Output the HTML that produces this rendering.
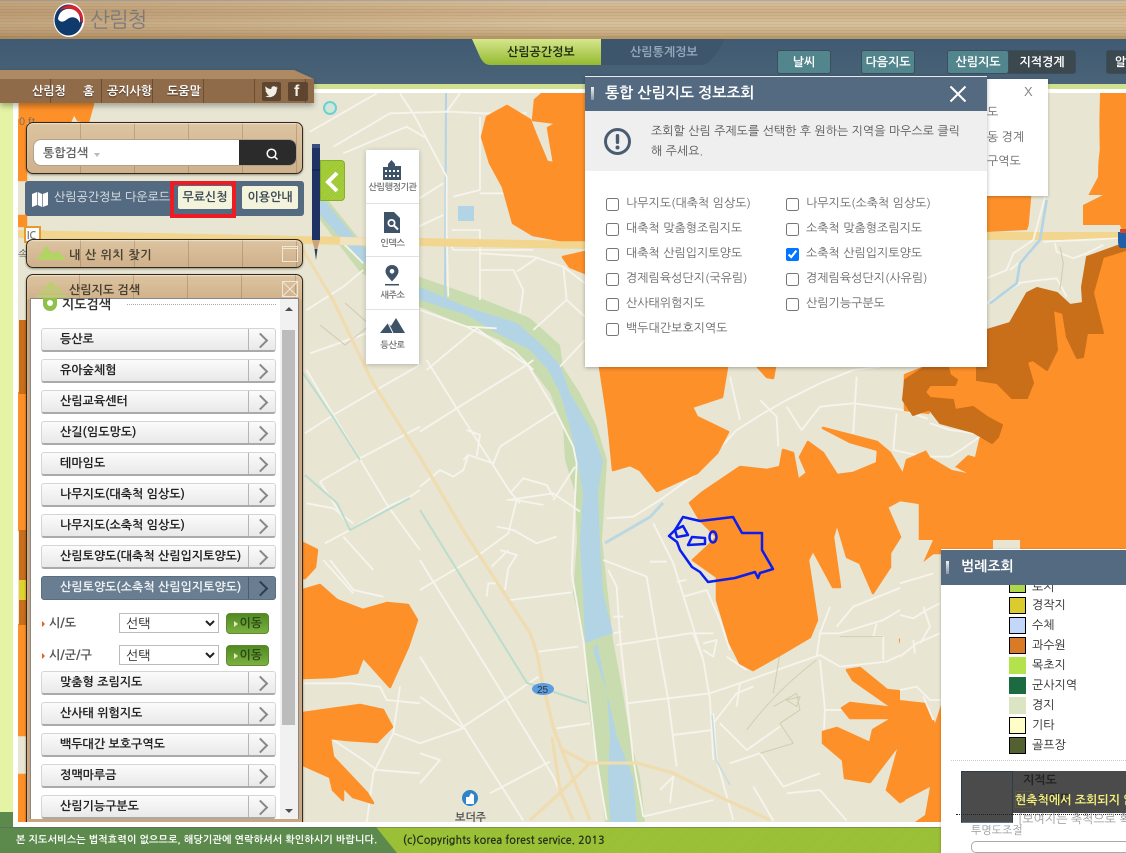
<!DOCTYPE html>
<html lang="ko"><head><meta charset="utf-8"><title>산림지도</title>
<style>
*{box-sizing:border-box}
html,body{margin:0;padding:0;width:1126px;height:853px;overflow:hidden}
body{background:#e4f3a4;font-family:"NanumGothic","Liberation Sans","Noto Sans CJK KR",sans-serif;color:#333}
#w{position:absolute;left:0;top:0;width:1126px;height:853px;overflow:hidden}
.a{position:absolute}
.t{position:absolute;white-space:nowrap}
.wood{background:repeating-linear-gradient(90deg,rgba(90,55,20,0) 0,rgba(90,55,20,0) 53px,rgba(90,55,20,.22) 53px,rgba(90,55,20,.22) 54px),linear-gradient(180deg,#dcc4a0,#cfb18b)}
.panel{border:1px solid #33281c;border-radius:7px;box-shadow:0 1px 1px rgba(255,255,255,.5) inset,0 1px 2px rgba(0,0,0,.4)}
.btn{position:absolute;left:41px;width:235px;height:24px;border:1px solid #d5d5d5;border-bottom:2px solid #aaa;border-radius:3px;background:linear-gradient(180deg,#fbfbfb,#e9e9e9);font-size:12px;font-weight:700;color:#222;line-height:21px;padding-left:18px;white-space:nowrap}
.btn:after{content:"";position:absolute;left:206px;top:0;bottom:0;width:1px;background:#b5b5b5}
.btn:before{content:"";position:absolute;left:213px;top:6px;width:9px;height:9px;border-top:2px solid #888;border-right:2px solid #888;transform:rotate(45deg)}
.btn.on{background:repeating-linear-gradient(135deg,#657a8e 0,#657a8e 1px,#6f8295 1px,#6f8295 2px);border:1px solid #5b6d7e;color:#eef1f4}
.btn.on:before{border-color:#2f3d4b}
.btn.on:after{background:#4d5d6c}
.nb{position:absolute;top:50px;height:24px;background:repeating-linear-gradient(135deg,#4f8189 0,#4f8189 1px,#568a92 1px,#568a92 2px);border:1px solid #3b4e5c;border-radius:3px;color:#fff;font-size:12px;font-weight:700;text-align:center;line-height:22px}
.ck{position:absolute;margin:0;width:13px;height:13px}
.cl{position:absolute;font-size:12px;color:#666;white-space:nowrap;line-height:14px}
.sw{position:absolute;left:1009px;width:17px;height:17px;border:1px solid #000}
.ll{position:absolute;left:1032px;font-size:12px;color:#222;white-space:nowrap;line-height:17px}
.tb{position:absolute;left:366px;width:53px;background:#fff;border-bottom:1px solid #e2e2e2;text-align:center}
.tb span{position:absolute;left:0;right:0;font-size:9px;font-weight:700;color:#777;white-space:nowrap;letter-spacing:-.4px}
select{position:absolute;left:119px;width:100px;height:20px;border:1px solid #bbb;background:#fff;font-family:"NanumGothic","Noto Sans CJK KR",sans-serif;font-size:13px;color:#222;padding-left:2px;border-radius:0}
.go{position:absolute;left:226px;width:43px;height:21px;border:1px solid #5d8a2e;border-radius:4px;background:linear-gradient(180deg,#4f8a22,#7cb040);color:#2d4a15;font-size:12px;font-weight:700;line-height:18px;text-align:right;padding-right:6px}
.go:before{content:"";position:absolute;left:7px;top:7px;border-left:4px solid #e8e8c0;border-top:3px solid transparent;border-bottom:3px solid transparent}
.sel-l{position:absolute;left:49px;font-size:12px;color:#555;font-weight:700;white-space:nowrap;line-height:15px}
.sel-l:before{content:"";position:absolute;left:-7px;top:5px;border-left:3px solid #e2601a;border-top:3px solid transparent;border-bottom:3px solid transparent}
</style></head><body><div id="w">

<!-- top wood -->
<div class="a" style="left:0;top:0;width:1126px;height:39px;background:linear-gradient(180deg,#b9b1a4 0,#b9b1a4 1px,#d6bd98 2px,#c9ab82 12px,#d6bf9a 24px,#c4a67c 34px,#ad8e5e 39px)"></div>
<div class="a" style="left:0;top:0;width:1126px;height:39px;background:repeating-linear-gradient(180deg,rgba(110,75,35,.07) 0,rgba(110,75,35,.07) 1px,rgba(255,240,210,.05) 1px,rgba(255,240,210,.05) 3px)"></div>
<div class="a" style="left:0;top:0;width:560px;height:39px;background:linear-gradient(90deg,rgba(140,100,60,.28),rgba(140,100,60,0))"></div>
<svg class="a" style="left:53px;top:2px" width="34" height="36" viewBox="0 0 34 36">
<ellipse cx="16" cy="18" rx="15.500" ry="17" fill="#fff"/>
<ellipse cx="15.500" cy="18" rx="14" ry="15.500" fill="#0f3a6b"/>
<path d="M5 17C6 9 12 6 18 7 24 8 28 13 27 21 25 16 21 14.500 17.500 15.500 14 16.500 13 19 10 19.500 8 20 6 19 5 17z" fill="#fff"/>
<path d="M6 9C10 3 17 2 22 4 28 7 31 13 30 21L28 20C28 13 24 8 18 7 13 6 8.500 7 6 9z" fill="#d8242f"/>
</svg>
<div class="t" style="left:90px;top:8px;font-size:21px;color:#7a7a7c;letter-spacing:-1px;line-height:26px">산림청</div>

<!-- nav bar -->
<div class="a" style="left:0;top:39px;width:1126px;height:45px;background:linear-gradient(180deg,#3f5a72,#4a6378)"></div>
<div class="a" style="left:0;top:84px;width:1126px;height:5px;background:#cfe08e"></div>
<div class="a" style="left:0;top:89px;width:1126px;height:4px;background:#fff"></div>
<svg class="a" style="left:470px;top:39px" width="262" height="28"><defs><linearGradient id="gt" x1="0" y1="0" x2="0" y2="1"><stop offset="0" stop-color="#d6e68c"/><stop offset="1" stop-color="#94ba30"/></linearGradient></defs><path d="M2 0H131V26H20Q14 26 10 18z" fill="url(#gt)"/><path d="M131 0H255Q248 14 240 22 236 26 230 26H131z" fill="#3d566c"/></svg>
<div class="t" style="left:507px;top:45px;font-size:12px;font-weight:700;color:#1f2d0d;line-height:15px">산림공간정보</div>
<div class="t" style="left:630px;top:45px;font-size:12px;font-weight:700;color:#94a9bb;line-height:15px">산림통계정보</div>
<div class="nb" style="left:777px;width:54px">날씨</div>
<div class="nb" style="left:861px;width:54px">다음지도</div>
<div class="nb" style="left:947px;width:62px">산림지도</div>
<div class="nb" style="left:1008px;width:68px;background:#3b484e;border-radius:0 3px 3px 0">지적경계</div>
<div class="nb" style="left:1106px;width:40px;background:#3b484e">알림</div>

<!-- left bg + map frame -->
<div class="a" style="left:13px;top:93px;width:1113px;height:734px;background:#fff"></div>

<svg class="a" style="left:18px;top:93px" width="1108" height="729" viewBox="18 93 1108 729">
<rect x="18" y="93" width="1108" height="729" fill="#e8e6d3"/>
<!-- river banks and river -->
<path d="M320 190 360 240 420 277 480 298 530 318 560 345 563 367 580 393 597 427 607 460 605 493 602 540 613 640 623 693 630 737 640 777 645 822H605L600 777 593 737 587 693 585 643 573 593 577 540 575 493 565 460 563 427 550 393 530 367 500 340 420 307 360 272 320 220z" fill="#c9dcb0"/>
<path d="M320 195 363 247 420 287 467 307 517 323 540 343 560 365 570 393 590 427 603 460 598 493 600 543 603 593 613 633 585 643 583 593 580 543 583 493 577 460 570 427 560 393 548 370 530 350 500 335 467 315 420 300 362 262 320 215z" fill="#b3d4e4"/>
<path d="M597 643 607 693 617 737 633 777 637 822H610L608 777 610 737 607 693 593 650z" fill="#b3d4e4"/>
<rect x="458" y="206" width="16" height="15" fill="#b3d4e4"/>
<path d="M446 93 445 300" stroke="#b3d4e4" stroke-width="2" fill="none"/>
<!-- roads -->
<g fill="none" stroke="#f6f4ec" stroke-width="1.800" stroke-linejoin="round">
<g transform="translate(420 360) scale(.3333)" stroke-width="5.500">
<path d="M20 0 110 145 270 395 300 430"/><path d="M0 215 110 145 320 15 340 0"/><path d="M240 260 405 155"/><path d="M140 210 180 225 170 290"/><path d="M130 300 145 285 220 310 240 260"/><path d="M0 380 60 330 100 350 130 330 145 285"/>
<path d="M320 10 405 150 460 260 470 310 455 640 490 840 530 1200 560 1380"/>
<path d="M0 690 170 590 265 520 290 420 260 420"/><path d="M265 420 400 400 480 455"/><path d="M270 400 310 355 380 375 400 410"/><path d="M290 420 370 435"/><path d="M400 420 465 320"/><path d="M230 500 280 510 350 550 410 530"/><path d="M240 570 290 585 265 625 255 690"/><path d="M215 620 265 570"/><path d="M200 710 205 670 240 670"/>
<path d="M0 600 30 650 130 810 260 1020 400 1250 440 1340"/><path d="M0 890 130 1100 310 1382"/><path d="M270 720 455 697"/><path d="M355 875 475 860"/><path d="M410 1105 510 1090"/><path d="M260 1015 130 1100"/><path d="M355 950 260 1015"/><path d="M210 1300 390 1205"/><path d="M0 1150 130 1105"/><path d="M0 1010 130 1105"/><path d="M0 1180 60 1200 0 1270"/>
<path d="M565 630 590 680 600 830 640 1200 670 1370"/><path d="M550 600 680 650 710 830 745 1020 770 1220"/><path d="M590 855 810 820 880 820"/><path d="M620 1030 870 1000"/><path d="M760 1125 880 1110"/><path d="M700 490 760 610 850 900 870 1020 880 1200"/><path d="M790 710 860 690 900 780 930 870"/><path d="M820 820 850 900"/><path d="M690 605 740 605"/><path d="M770 665 800 660"/><path d="M580 770 610 770"/><path d="M580 820 605 815"/><path d="M850 850 890 840 880 890 850 870"/>
<path d="M870 1000 960 970 1100 920 1200 885 1260 920 1400 905 1560 830"/><path d="M560 475 640 470 720 420 830 340 950 210 1030 160 1100 120 1200 70 1300 30 1380 20"/><path d="M1200 140 1300 130 1450 150 1560 190"/><path d="M1100 140 1145 210 1200 140"/><path d="M930 50 960 180"/><path d="M1020 120 1070 170 1075 260"/><path d="M1310 50 1300 220"/><path d="M1430 160 1420 270 1560 300"/><path d="M1200 820 1260 820 1390 780 1560 680"/><path d="M1250 800 1300 740 1450 680 1560 630"/><path d="M1190 890 1200 820 1230 740"/><path d="M1370 790 1360 830 1390 830 1390 900"/><path d="M1480 780 1520 780 1550 860"/>
<path d="M880 1060 890 1200 940 1380"/><path d="M900 1090 980 1170 1080 1100"/><path d="M930 1210 1020 1180 1090 1280 1200 1240"/><path d="M1200 900 1215 1050 1210 1150"/><path d="M1215 1050 1320 1050"/><path d="M670 1370 880 1320"/><path d="M1000 1280 1060 1382"/><path d="M720 1290 760 1250 750 1330"/><path d="M1100 1300 1200 1290 1280 1382"/><path d="M880 1090 950 1000 1000 980"/><path d="M960 970 950 1040"/><path d="M920 890 980 930"/>
</g>
<g transform="translate(300 80) scale(.3333)" stroke-width="5.500">
<path d="M300 40 345 110 440 290 440 470 445 650"/><path d="M30 155 230 40"/><path d="M100 200 270 100 450 95 550 100 680 100"/><path d="M130 220 320 140 380 175"/><path d="M350 360 430 310"/><path d="M355 440 430 405"/><path d="M440 95 480 40"/><path d="M540 110 540 330 460 350"/><path d="M540 340 680 340"/><path d="M455 450 540 450 540 660"/><path d="M540 520 700 530 790 560 855 610"/><path d="M540 570 640 570 670 630 660 700"/><path d="M650 575 710 535"/><path d="M790 560 800 660 700 750"/><path d="M800 660 855 710"/><path d="M20 690 130 620 190 570"/><path d="M190 550 130 490"/><path d="M70 480 130 490"/><path d="M360 690 500 740 590 745"/><path d="M380 870 530 745 700 870"/><path d="M500 740 640 810 700 870"/><path d="M780 860 855 780"/><path d="M440 470 460 510 700 510"/>
</g>
<g transform="translate(0 270) scale(.3333)" stroke-width="5.500">
<path d="M920 300 1000 435 1165 710 1260 840"/><path d="M1000 435 1120 365 1260 285"/><path d="M915 490 1000 435"/><path d="M1080 565 1260 470"/><path d="M960 635 1080 565"/><path d="M930 250 1100 190"/><path d="M960 635 1040 760"/><path d="M1050 780 1165 710 1230 680 1260 660"/><path d="M975 820 1050 780"/><path d="M1030 800 1120 900"/><path d="M920 700 1000 715 1060 760"/>
</g>
<g transform="translate(0 560) scale(.3333)" stroke-width="5.500">
<path d="M990 0 1060 90 1150 110"/><path d="M970 0 1060 100"/><path d="M910 370 1050 370 1140 380 1160 420 1260 430"/><path d="M1200 380 1180 520 1120 640 1100 790"/><path d="M1180 520 1260 550"/><path d="M1000 540 1090 600 1130 630 1260 640"/>
</g>
</g>
<path d="M345 303 370 325 345 345 320 325" fill="none" stroke="#cfcab0"/>
<g fill="none" stroke="#d2cdb0" transform="translate(420 360) scale(.3333)"><path stroke-width="3" d="M980 1110C1040 1030 1110 960 1190 900M1060 1040 1130 1000 1140 1050 1080 1090 1120 1150 1020 1180M1100 1020 1140 1010 1130 1040z"/><path stroke-width="3" d="M1260 830 1390 830M1060 1000 1080 880"/></g>
<!-- highway -->
<path d="M18 234 300 240 585 245" fill="none" stroke="#f2d68f" stroke-width="8"/>
<path d="M340 241 420 243" fill="none" stroke="#f2e3bf" stroke-width="8"/>
<g fill="none" stroke="#efdcb0" stroke-width="3.300">
<path d="M303 250 333 300 373 383 420 457 463 530 530 633 537 653 542 680 553 727 563 753 590 820"/>
<path d="M563 750 587 763 637 763 673 773 720 797 770 820"/><path d="M590 763 560 793 530 820"/><path d="M552 737 560 790 573 820"/>
</g>
<!-- streams -->
<g fill="none" stroke="#bcdcce" stroke-width="2"><path d="M420 510 527 683 587 703"/><path d="M303 373 333 417 360 460"/><path d="M305 475 337 503 350 530 410 498"/></g>
<path d="M605 543 650 517 663 503" fill="none" stroke="#bad7e2" stroke-width="3"/>
<path d="M712 715 716 760 730 785" fill="none" stroke="#c5dde0" stroke-width="1.500"/>
<ellipse cx="543" cy="689" rx="11" ry="6" fill="#5b9de0"/><text x="537" y="693" font-size="10" font-family="Liberation Sans" fill="#333">25</text>
<circle cx="330" cy="108" r="6" fill="#cfe6d8" stroke="#6cd0d6" stroke-width="2"/>
<!-- orange -->
<g fill="#fe9029" stroke="#fe9029" stroke-width="2.500" stroke-linejoin="round">
<path d="M543 93H585V240H560L533 235 513 223 503 187 490 163 482 137 487 117 507 106 530 120 535 133 547 162 554 163 548 128 557 123 533 120 535 100z"/>
<path d="M563 257 585 252V273L570 267z"/>
<path d="M600 367H727L722 397 692 407 697 417 728 432 717 453 697 473 657 491 640 470 630 465 613 470 608 420z"/>
<path d="M758 367H775L773 378 767 377z"/>
<path d="M905 375 925 367H987V420L905 410z"/>
<path d="M690 503 703 492 740 467 767 470 780 467 783 450 793 453 798 480 807 473 800 457 808 442 823 453 837 475 853 473 877 463 878 450 850 442 823 428 850 435 877 442 890 453 903 475 907 460 930 450 1000 400 1126 220V553H933L920 563 920 503 900 500 887 507 900 537 890 553 890 567 873 593 860 563 847 557 837 523 833 537 840 587 833 587 813 550 808 560 817 620 810 637 783 653 753 670 740 663 730 643 717 600 717 577 693 560 707 547 717 537 700 520z"/>
<path d="M940 367H987V340L1010 323 1126 240V830H910L913 807 930 788 900 802 887 790 900 743 870 782 845 778 843 760 823 743 823 732 837 728 870 743 873 730 893 718 850 718 842 708 850 703 893 708 853 680 847 670 860 668 887 690 917 693 900 640 1000 500z"/>
<path d="M303 590 320 585 337 600 363 610 387 603 408 605 417 620 408 647 390 687 363 657 357 673 333 677 303 678z"/>
<path d="M303 713 360 705 383 710 392 727 377 742 347 740 330 738 333 757 367 793 373 803 353 797 343 787 343 800 333 790 330 777 303 765z"/>
<path d="M303 543 317 550 315 567 305 578 303 578z"/>
<path d="M987 197H1030L1027 230 987 232z"/>
<path d="M1100 93H1126V230H1083L1083 205 1098 177 1101 150z"/>
<path d="M937 633 940 630V648L936 645z"/>
<rect x="19" y="120" width="7" height="60"/>
<path d="M19 393H26V530H19z"/><path d="M19 625H26V735H19z"/><path d="M19 775H26V822H19z"/><rect x="19" y="216" width="7" height="10"/>
<path d="M20 104H93L88 122 78 120 74 113 70 122H20z"/>
</g>
<!-- tan cutouts -->
<g fill="#e8e6d3">
<path d="M938 410 930 412 920 440 930 457 952 470 967 473 955 467 968 455 975 457 980 435 960 420z"/>
<path d="M1040 195H1103L1083 205 1083 225 1120 225 1126 243 1087 257 1082 287 1083 303 1070 305 1057 293 1037 288 1027 293 1010 323 987 330V232L1027 230z"/>
<path d="M933 540H900V700L927 703 935 723 941 705V565L922 565z"/>
<path d="M900 822 905 800 930 787 925 815 915 822z"/>
<path d="M993 540H1020V549H993z"/>
<path d="M1048 93H1100L1098 177 1083 205 1047 195z"/>
</g>
<!-- roads in right tan patches -->
<g fill="none" stroke="#f6f4ec" stroke-linejoin="round">
<path d="M987 236H1120" stroke="#f2d68f" stroke-width="8"/>
<g transform="translate(930 190) scale(.3333)" stroke-width="5.500">
<path d="M170 265 230 240 250 190 310 150 340 40 350 0"/><path d="M340 155 570 145"/><path d="M375 160 380 185 430 205 470 190 520 165"/><path d="M240 240 270 215 300 190"/><path d="M260 280 330 270 380 265 410 320"/><path d="M170 340 270 280"/>
<path d="M180 340 260 280 270 220 330 150 350 30" stroke="#b3d4e4" stroke-width="8"/>
<path d="M0 700 60 720 100 725 155 735"/><path d="M0 800 60 800 100 775 150 740"/>
<path d="M390 170 400 220 390 300" stroke="#cfcab0" stroke-width="3"/>
</g>
<g transform="translate(900 540) scale(.3333)" stroke-width="5.500">
<path d="M0 130 100 100"/><path d="M0 225 40 235 80 210 120 190"/><path d="M70 200 90 260 60 310"/><path d="M0 350 50 310 120 280"/><path d="M0 450 50 440 90 480 122 480"/><path d="M40 300 45 340"/><path d="M70 470 100 540"/>
</g>
</g>
<!-- dark orange -->
<g fill="#c96f1a" stroke="#c96f1a" stroke-width="2" stroke-linejoin="round">
<path d="M987 330 1010 323 1027 293 1037 288 1057 293 1070 305 1083 303 1082 287 1087 257 1126 243V250L1103 257 1093 293 1103 333 1087 333 1083 357 1077 358 1067 337 1063 313 1053 310 1057 350 1047 370 1033 360 1027 362 1033 383 1027 398 1012 398 997 383 977 380 977 367z"/>
<path d="M905 380 925 367H948L950 375 957 380 955 385H930L925 392 930 398 953 400 955 410 973 407 987 417 1002 425 998 437 992 443 973 432 940 423 930 410 927 410 913 415 903 400z"/>
</g>
<g fill="#c96f1a"><rect x="19" y="320" width="7" height="74"/><rect x="19" y="530" width="7" height="95"/></g>
<rect x="19" y="580" width="7" height="20" fill="#dfd12f"/>
<!-- blue outline -->
<g fill="none" stroke="#0a1ef0" stroke-width="2.500" stroke-linejoin="round">
<path d="M683 517 700 521 733 517 742 533 762 533 762 550 773 569 760 573 758 578 755 572 735 578 708 582 700 572 692 567 680 550 677 542 669 536 675 530z"/>
<path d="M675 530 683 526 688 535 677 537z"/><path d="M692 537 705 538 705 544 688 545z"/><ellipse cx="713" cy="537" rx="3.500" ry="5.500"/>
</g>
<!-- markers -->
<circle cx="470" cy="798" r="8" fill="#2f83c9"/><path d="M466 804V797H469L471 793 474 795V804z" fill="#fff"/>
<text x="455" y="821" font-size="11" fill="#555" font-weight="700">보더주</text>
<path d="M1118 232H1126V248H1120Q1118 246 1118 240z" fill="#1e5fa8"/><rect x="1120" y="229" width="6" height="4" fill="#d2462a"/>
<text x="19" y="125" font-size="10" fill="#666">0 ft</text>
<rect x="25" y="227" width="15" height="15" fill="#fff" stroke="#e89a2c" stroke-width="2"/><text x="27" y="239" font-size="10" font-weight="700" fill="#777">IC</text>
<text x="18" y="258" font-size="11" fill="#555">속</text>
</svg>

<!-- top-left wood menu -->
<svg class="a" style="left:0;top:70px;filter:drop-shadow(0 3px 3px rgba(0,0,0,.3))" width="314" height="40"><path d="M0 0H294L314 9V33H0z" fill="#8f6b4a"/><path d="M0 0H294L314 9H0z" fill="#ad8a63"/></svg>
<div class="a" style="left:0;top:79px;width:314px;height:24px;background:repeating-linear-gradient(90deg,rgba(60,30,10,0) 0,rgba(60,30,10,0) 50px,rgba(60,30,10,.4) 50px,rgba(60,30,10,.4) 51px)"></div>
<div class="t" style="left:32px;top:84px;font-size:12px;font-weight:700;color:#fff;line-height:14px;text-shadow:0 1px 1px #4a3220">산림청</div>
<div class="t" style="left:83px;top:84px;font-size:12px;font-weight:700;color:#fff;line-height:14px;text-shadow:0 1px 1px #4a3220">홈</div>
<div class="t" style="left:107px;top:84px;font-size:12px;font-weight:700;color:#fff;line-height:14px;text-shadow:0 1px 1px #4a3220">공지사항</div>
<div class="t" style="left:167px;top:84px;font-size:12px;font-weight:700;color:#fff;line-height:14px;text-shadow:0 1px 1px #4a3220">도움말</div>
<div class="a" style="left:262px;top:82px;width:19px;height:19px;background:#5e4530;border-radius:2px"></div>
<svg class="a" style="left:264px;top:85px" width="15" height="13"><path d="M14 2.500 12.300 3C13 2 13 1.500 13 1.500L11.500 2C10 .5 7 1.500 7.300 4 5 4 3 3 1.500 1.200 1 3 1.500 4.500 2.500 5.500L1.500 5.200C1.500 6.800 2.500 7.800 3.800 8.200H2.700C3.200 9.300 4 10 5.300 10 4 11 2.500 11.300 1 11.200 7 14 13 10.500 12.800 4z" fill="#f4efe6"/></svg>
<div class="a" style="left:288px;top:82px;width:20px;height:19px;background:#5e4530;border-radius:2px"></div>
<div class="t" style="left:294px;top:82px;font:700 16px/20px 'Liberation Sans',sans-serif;color:#f4efe6">f</div>

<!-- search panel -->
<div class="a wood panel" style="left:26px;top:122px;width:277px;height:52px"></div>
<div class="a" style="left:33px;top:139px;width:264px;height:27px;border-radius:8px;background:#fff;border:1px solid #ada18f;overflow:hidden">
<div class="a" style="left:205px;top:0;right:0;bottom:0;background:#2b2b2b"></div></div>
<div class="t" style="left:43px;top:146px;font-size:12px;font-weight:700;color:#666;line-height:15px">통합검색</div>
<div class="a" style="left:94px;top:153px;border-top:4px solid #bbb;border-left:3.500px solid transparent;border-right:3.500px solid transparent"></div>
<svg class="a" style="left:265px;top:147px" width="14" height="14"><circle cx="6.500" cy="6.500" r="4.300" fill="none" stroke="#fff" stroke-width="1.500"/><path d="M9.800 9.800 12.500 12.500" stroke="#fff" stroke-width="1.500"/></svg>

<!-- download panel -->
<div class="a" style="left:25px;top:181px;width:279px;height:35px;background:#546a80;border-radius:3px"></div>
<svg class="a" style="left:32px;top:192px" width="16" height="15"><path d="M0 2 5 0V13L0 15zM5.700 0 10 2V15L5.700 13zM10.700 2 16 0V13L10.700 15z" fill="#fff"/></svg>
<div class="t" style="left:54px;top:190px;font-size:12px;color:#e6ebef;line-height:15px">산림공간정보 다운로드</div>
<div class="a" style="left:170px;top:181px;width:66px;height:37px;border:4px solid #ed1c24"></div>
<div class="a" style="left:178px;top:186px;width:54px;height:23px;background:#f4f3dc;border-radius:2px;font-size:12px;color:#3d4c58;text-align:center;line-height:22px;font-weight:700">무료신청</div>
<div class="a" style="left:242px;top:186px;width:56px;height:23px;background:#f4f3dc;border-radius:2px;font-size:12px;color:#3d4c58;text-align:center;line-height:22px;font-weight:700">이용안내</div>

<!-- pencil -->
<svg class="a" style="left:311px;top:142px" width="10" height="120"><path d="M1 2H9V98H1z" fill="#1e3264"/><path d="M1 2H9V6H1z" fill="#39507d"/><path d="M1 28H9" stroke="#0f1d40"/><path d="M1 98H9L5 112z" fill="#c9a67a"/><path d="M3.500 107 6.500 107 5 118z" fill="#2b3f63"/></svg>
<!-- toggle -->
<div class="a" style="left:320px;top:160px;width:25px;height:41px;background:repeating-linear-gradient(135deg,#9ac631 0,#9ac631 1px,#aad13f 1px,#aad13f 2px);border:1px solid #88ae2b;border-radius:0 4px 4px 0"></div>
<svg class="a" style="left:325px;top:171px" width="14" height="22"><path d="M12 2 3 11 12 20" fill="none" stroke="#fff" stroke-width="4"/></svg>

<!-- tool box -->
<div class="a" style="left:366px;top:150px;width:53px;height:214px;background:#fff;box-shadow:0 1px 5px rgba(0,0,0,.22)"></div>
<div class="tb" style="top:150px;height:54px"><span style="top:33px">산림행정기관</span></div>
<svg class="a" style="left:382px;top:160px" width="20" height="20"><path d="M1 7H6V4L9.500 0 13 4V6H19V20H1z" fill="#3f5368"/><g fill="#fff"><rect x="3" y="10" width="2" height="2"/><rect x="7" y="10" width="2" height="2"/><rect x="11" y="10" width="2" height="2"/><rect x="15" y="10" width="2" height="2"/><rect x="3" y="15" width="2" height="2"/><rect x="7" y="15" width="2" height="2"/><rect x="11" y="15" width="2" height="2"/><rect x="15" y="15" width="2" height="2"/></g></svg>
<div class="tb" style="top:204px;height:53px"><span style="top:35px">인덱스</span></div>
<svg class="a" style="left:384px;top:212px" width="16" height="21"><path d="M0 0H10L16 6V21H0z" fill="#3f5368"/><circle cx="7.500" cy="11" r="4" fill="#fff"/><circle cx="7.500" cy="11" r="2.300" fill="#3f5368"/><path d="M10 13.500 14 17.500" stroke="#fff" stroke-width="2"/></svg>
<div class="tb" style="top:257px;height:53px"><span style="top:34px">새주소</span></div>
<svg class="a" style="left:384px;top:265px" width="16" height="21"><path d="M8 0C4 0 1.500 3 1.500 6.300 1.500 10 5 13 8 16.500 11 13 14.500 10 14.500 6.300 14.500 3 12 0 8 0z" fill="#3f5368"/><circle cx="8" cy="6.300" r="2.300" fill="#fff"/><rect x="1" y="19" width="14" height="1.500" fill="#3f5368"/></svg>
<div class="tb" style="top:310px;height:54px;border:0"><span style="top:31px">등산로</span></div>
<svg class="a" style="left:380px;top:318px" width="25" height="15"><path d="M0 15 8 5 11 8 16 0 25 15z" fill="#3f5368"/><path d="M8 5 13 15" stroke="#fff" stroke-width="1"/></svg>

<!-- my mountain panel -->
<div class="a wood panel" style="left:26px;top:239px;width:277px;height:29px"></div>
<svg class="a" style="left:37px;top:246px" width="30" height="14"><path d="M0 14 9 0 16 8 21 5 29 14z" fill="#b2d462"/></svg>
<div class="t" style="left:69px;top:248px;font-size:12px;font-weight:700;color:#4a4030;letter-spacing:.6px;line-height:15px">내 산 위치 찾기</div>
<div class="a" style="left:282px;top:246px;width:16px;height:16px;border:1px solid #f1e7d6"></div>
<div class="a" style="left:283px;top:248px;width:14px;height:1px;background:#f1e7d6"></div>

<!-- forest search panel -->
<div class="a wood panel" style="left:26px;top:274px;width:277px;height:549px;background:linear-gradient(180deg,#dcc4a0 0,#d0b28c 24px,#c9a67f 25px,#c9a67f 100%);border-radius:7px 7px 0 0"></div>
<div class="a" style="left:26px;top:275px;width:277px;height:24px;background:repeating-linear-gradient(90deg,rgba(90,55,20,0) 0,rgba(90,55,20,0) 53px,rgba(90,55,20,.22) 53px,rgba(90,55,20,.22) 54px)"></div>
<svg class="a" style="left:37px;top:282px" width="32" height="15"><g fill="#b2d462"><path d="M14 0 19 4H9z"/><rect x="6" y="5" width="17" height="2"/><rect x="3" y="9" width="23" height="2"/><rect x="0" y="13" width="30" height="2"/></g></svg>
<div class="t" style="left:69px;top:283px;font-size:12px;font-weight:700;color:#4a4030;line-height:15px">산림지도 검색</div>
<div class="a" style="left:282px;top:281px;width:16px;height:16px;border:1px solid #f1e7d6"></div>
<svg class="a" style="left:282px;top:281px" width="16" height="16"><path d="M0 0 16 16M16 0 0 16" stroke="#f1e7d6"/></svg>
<div class="a" style="left:30px;top:298px;width:269px;height:521px;background:#fff;border:1px solid #888;border-bottom:0"></div>
<div class="a" style="left:280px;top:299px;width:18px;height:520px;background:#f1f1f1"></div>
<div class="a" style="left:282px;top:330px;width:13px;height:395px;background:#bcbcbc"></div>
<div class="a" style="left:285px;top:307px;border-bottom:4px solid #505050;border-left:4px solid transparent;border-right:4px solid transparent"></div>
<div class="a" style="left:285px;top:809px;border-top:4px solid #505050;border-left:4px solid transparent;border-right:4px solid transparent"></div>
<div class="a" style="left:43px;top:298px;width:14px;height:13px;background:#8fc04a;border-radius:0 0 7px 7px"></div>
<div class="a" style="left:47px;top:300px;width:6px;height:6px;background:#fff;border-radius:50%"></div>
<div class="t" style="left:62px;top:297px;font-size:13px;font-weight:700;color:#333;line-height:16px">지도검색</div>
<div class="a" style="left:127px;top:304px;width:149px;border-top:1px dotted #aaa"></div>

<div class="btn" style="top:328px">등산로</div>
<div class="btn" style="top:359px">유아숲체험</div>
<div class="btn" style="top:390px">산림교육센터</div>
<div class="btn" style="top:421px">산길(임도망도)</div>
<div class="btn" style="top:452px">테마임도</div>
<div class="btn" style="top:483px">나무지도(대축척 임상도)</div>
<div class="btn" style="top:514px">나무지도(소축척 임상도)</div>
<div class="btn" style="top:545px">산림토양도(대축척 산림입지토양도)</div>
<div class="btn on" style="top:576px">산림토양도(소축척 산림입지토양도)</div>
<div class="sel-l" style="top:616px">시/도</div>
<select style="top:613px"><option>선택</option></select>
<div class="go" style="top:613px">이동</div>
<div class="sel-l" style="top:648px">시/군/구</div>
<select style="top:645px"><option>선택</option></select>
<div class="go" style="top:645px">이동</div>
<div class="btn" style="top:671px">맞춤형 조림지도</div>
<div class="btn" style="top:702px">산사태 위험지도</div>
<div class="btn" style="top:733px">백두대간 보호구역도</div>
<div class="btn" style="top:764px">정맥마루금</div>
<div class="btn" style="top:795px;height:24px">산림기능구분도</div>

<!-- small popup behind the dialog -->
<div class="a" style="left:960px;top:79px;width:88px;height:117px;background:#fff;box-shadow:0 1px 3px rgba(0,0,0,.25)"></div>
<div class="t" style="left:1024px;top:85px;font:13px/14px 'Liberation Sans',sans-serif;color:#888">X</div>
<div class="t" style="left:987px;top:105px;font-size:12px;color:#666;line-height:15px">도</div>
<div class="t" style="left:987px;top:130px;font-size:12px;color:#666;line-height:15px">동 경계</div>
<div class="t" style="left:987px;top:154px;font-size:12px;color:#666;line-height:15px">구역도</div>

<!-- main dialog -->
<div class="a" style="left:585px;top:76px;width:402px;height:291px;background:#fff;box-shadow:0 1px 4px rgba(0,0,0,.3)"></div>
<div class="a" style="left:585px;top:76px;width:402px;height:35px;background:#546a80;border-top:1px solid #e8ecef"></div>
<div class="a" style="left:591px;top:87px;width:3px;height:13px;background:linear-gradient(180deg,#f0f0f0,#8b96a6)"></div>
<div class="t" style="left:605px;top:84px;font-size:15px;font-weight:700;color:#fff;line-height:20px">통합 산림지도 정보조회</div>
<svg class="a" style="left:949px;top:85px" width="18" height="18"><path d="M1.500 1.500 16.500 16.500M16.500 1.500 1.500 16.500" stroke="#fff" stroke-width="2"/></svg>
<div class="a" style="left:585px;top:111px;width:402px;height:60px;background:#efefef"></div>
<svg class="a" style="left:603px;top:127px" width="29" height="29"><circle cx="14.500" cy="14.500" r="12" fill="none" stroke="#4a5d70" stroke-width="3"/><rect x="12.800" y="7" width="3.400" height="10" rx="1.500" fill="#4a5d70"/><circle cx="14.500" cy="20.500" r="2" fill="#4a5d70"/></svg>
<div class="a" style="left:651px;top:121px;width:320px;font-size:12px;color:#555;line-height:20px">조회할 산림 주제도를 선택한 후 원하는 지역을 마우스로 클릭<br>해 주세요.</div>

<input class="ck" type="checkbox" style="left:606px;top:198px"><div class="cl" style="left:626px;top:196px">나무지도(대축척 임상도)</div>
<input class="ck" type="checkbox" style="left:786px;top:198px"><div class="cl" style="left:806px;top:196px">나무지도(소축척 임상도)</div>
<input class="ck" type="checkbox" style="left:606px;top:223px"><div class="cl" style="left:626px;top:221px">대축척 맞춤형조림지도</div>
<input class="ck" type="checkbox" style="left:786px;top:223px"><div class="cl" style="left:806px;top:221px">소축척 맞춤형조림지도</div>
<input class="ck" type="checkbox" style="left:606px;top:248px"><div class="cl" style="left:626px;top:246px">대축척 산림입지토양도</div>
<input class="ck" type="checkbox" checked style="left:786px;top:248px"><div class="cl" style="left:806px;top:246px">소축척 산림입지토양도</div>
<input class="ck" type="checkbox" style="left:606px;top:273px"><div class="cl" style="left:626px;top:271px">경제림육성단지(국유림)</div>
<input class="ck" type="checkbox" style="left:786px;top:273px"><div class="cl" style="left:806px;top:271px">경제림육성단지(사유림)</div>
<input class="ck" type="checkbox" style="left:606px;top:298px"><div class="cl" style="left:626px;top:296px">산사태위험지도</div>
<input class="ck" type="checkbox" style="left:786px;top:298px"><div class="cl" style="left:806px;top:296px">산림기능구분도</div>
<input class="ck" type="checkbox" style="left:606px;top:323px"><div class="cl" style="left:626px;top:321px">백두대간보호지역도</div>

<!-- footer -->
<div class="a" style="left:0;top:827px;width:1126px;height:26px;background:repeating-linear-gradient(135deg,#96bd33 0,#96bd33 1px,#9ec33a 1px,#9ec33a 2px)"></div>
<svg class="a" style="left:0;top:827px" width="400" height="26"><path d="M0 0H376L397 26H0z" fill="#5c8a4c"/></svg>
<div class="a" style="left:0;top:812px;width:13px;height:15px;background:#5c8a4c"></div>
<div class="a" style="left:13px;top:822px;width:1113px;height:5px;background:#fff"></div>
<div class="a" style="left:0;top:827px;width:1126px;height:1px;background:rgba(90,90,90,.45)"></div>
<div class="t" style="left:16px;top:834px;font-size:10px;font-weight:700;color:#fff;line-height:14px;letter-spacing:.15px">본 지도서비스는 법적효력이 없으므로, 해당기관에 연락하셔서 확인하시기 바랍니다.</div>
<div class="t" style="left:403px;top:834px;font-size:11px;font-weight:700;color:#26331a;line-height:14px">(c)Copyrights korea forest service. 2013</div>

<!-- legend -->
<div class="a" style="left:941px;top:549px;width:185px;height:304px;background:#fff;box-shadow:-1px 0 2px rgba(0,0,0,.15)"></div>
<div class="a" style="left:941px;top:550px;width:185px;height:35px;background:#546a80"></div>
<div class="a" style="left:946px;top:561px;width:3px;height:13px;background:linear-gradient(180deg,#f0f0f0,#8b96a6)"></div>
<div class="t" style="left:961px;top:558px;font-size:14px;font-weight:700;color:#fff;line-height:19px">범례조회</div>
<div class="sw" style="top:585px;height:8px;background:#aed84a;border-top:0"></div><div class="ll" style="top:585px;height:8px;overflow:hidden;line-height:4px">토지</div>
<div class="sw" style="top:597px;background:#dccb2e"></div><div class="ll" style="top:597px">경작지</div>
<div class="sw" style="top:617px;background:#c3d7fb"></div><div class="ll" style="top:617px">수체</div>
<div class="sw" style="top:637px;background:#d97b26"></div><div class="ll" style="top:637px">과수원</div>
<div class="sw" style="top:657px;background:#b4e24c;border:0"></div><div class="ll" style="top:657px">목초지</div>
<div class="sw" style="top:677px;background:#1c6a3f;border:0"></div><div class="ll" style="top:677px">군사지역</div>
<div class="sw" style="top:697px;background:#dbe5c4;border:0"></div><div class="ll" style="top:697px">경지</div>
<div class="sw" style="top:717px;background:#fffec8"></div><div class="ll" style="top:717px">기타</div>
<div class="sw" style="top:737px;background:#52612f"></div><div class="ll" style="top:737px">골프장</div>
<div class="a" style="left:951px;top:760px;width:175px;border-top:1px dotted #ccc"></div>
<div class="a" style="left:1013px;top:771px;width:113px;height:42px;background:#4b4b4b"></div>
<div class="a" style="left:961px;top:771px;width:52px;height:52px;background:#4b4b4b;border:1px solid #2f3b46;border-bottom-color:#5b7a96"></div>
<div class="t" style="left:1023px;top:772px;font-size:12px;font-weight:700;color:#222;line-height:16px">지적도</div>
<div class="a" style="left:1015px;top:791px;width:17px;height:17px;border:1px solid #5a5a3a"></div>
<div class="t" style="left:1037px;top:791px;font-size:12px;color:#111;line-height:16px">지적도</div>
<div class="t" style="left:1015px;top:792px;font-size:12px;font-weight:700;color:#f2ee7a;line-height:16px">현축척에서 조회되지 않습니다</div>
<div class="a" style="left:956px;top:814px;width:170px;border-top:1px dotted #222"></div>
<div class="t" style="left:1018px;top:811px;font-size:12px;color:#999;line-height:16px">[보여지는 축척으로 확대]</div>
<div class="t" style="left:971px;top:824px;font-size:11px;color:#999;line-height:14px">투명도조절</div>
<div class="a" style="left:971px;top:841px;width:175px;height:12px;border:1px solid #aaa;border-radius:5px"></div>

</div></body></html>
